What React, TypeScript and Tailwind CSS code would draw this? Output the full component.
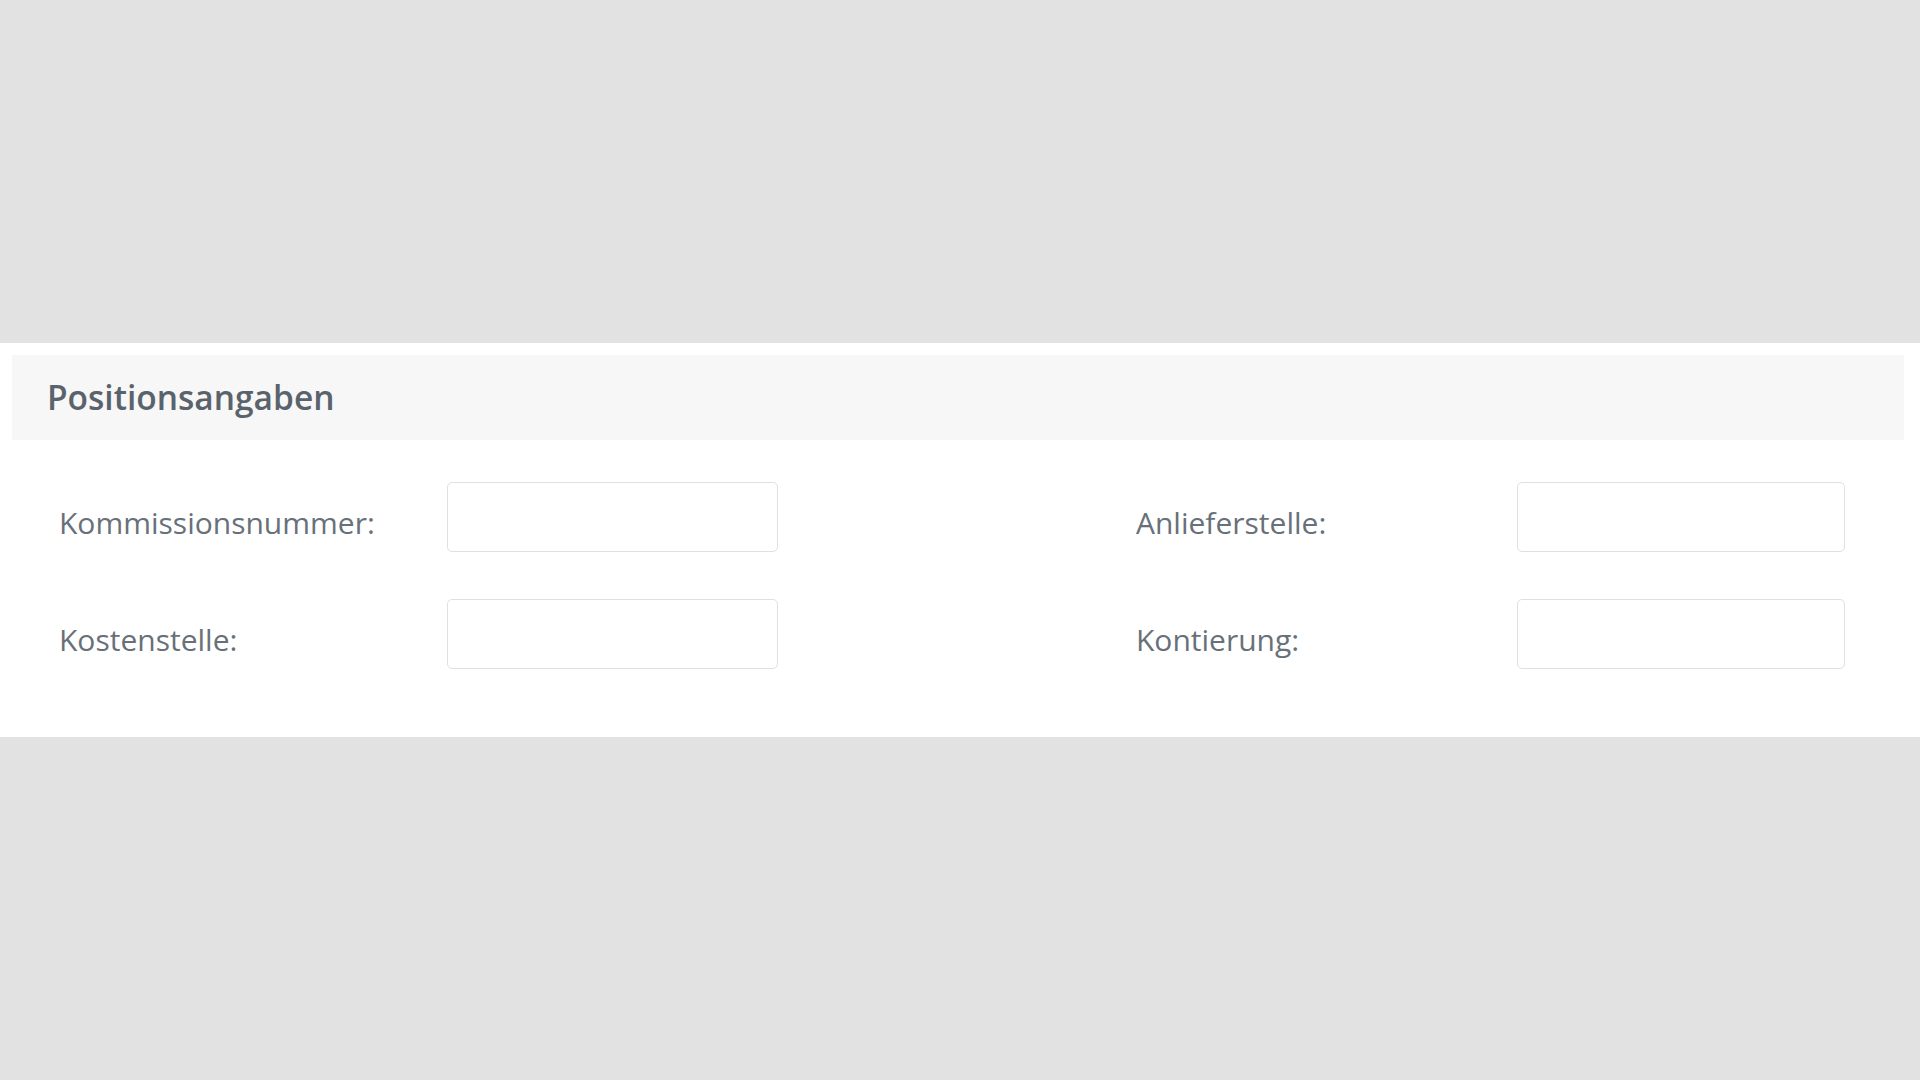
import React from "react";

const labelCls =
  "text-[30px] leading-none text-[#687079] pt-[12px]";

export default function App() {
  return (
    <div
      className="min-h-screen w-full bg-[#e2e2e2] pt-[343px]"
      style={{ fontFamily: '"Open Sans", "Noto Sans", sans-serif' }}
    >
      <div className="bg-white pt-[12px] pl-[12px] pr-[16px]">
        <div className="h-[85px] bg-[#f7f7f7] flex items-center pl-[35px]">
          <h2 className="text-[33.5px] font-semibold text-[#5a636c] leading-none">
            Positionsangaben
          </h2>
        </div>
        <div className="pl-[47px] pt-[42px] pb-[68px] flex flex-col gap-[47px]">
          <div className="flex items-center h-[70px]">
            <div className="w-[388px] flex items-center h-full">
              <span className={labelCls}>Kommissionsnummer:</span>
            </div>
            <input
              type="text"
              className="w-[331px] h-[70px] border border-[#e0e0e0] rounded-[5px] bg-white outline-none"
            />
            <div className="w-[358px]" />
            <div className="w-[381px] flex items-center h-full">
              <span className={labelCls}>Anlieferstelle:</span>
            </div>
            <input
              type="text"
              className="w-[328px] h-[70px] border border-[#e0e0e0] rounded-[5px] bg-white outline-none"
            />
          </div>
          <div className="flex items-center h-[70px]">
            <div className="w-[388px] flex items-center h-full">
              <span className={labelCls}>Kostenstelle:</span>
            </div>
            <input
              type="text"
              className="w-[331px] h-[70px] border border-[#e0e0e0] rounded-[5px] bg-white outline-none"
            />
            <div className="w-[358px]" />
            <div className="w-[381px] flex items-center h-full">
              <span className={labelCls}>Kontierung:</span>
            </div>
            <input
              type="text"
              className="w-[328px] h-[70px] border border-[#e0e0e0] rounded-[5px] bg-white outline-none"
            />
          </div>
        </div>
      </div>
    </div>
  );
}
